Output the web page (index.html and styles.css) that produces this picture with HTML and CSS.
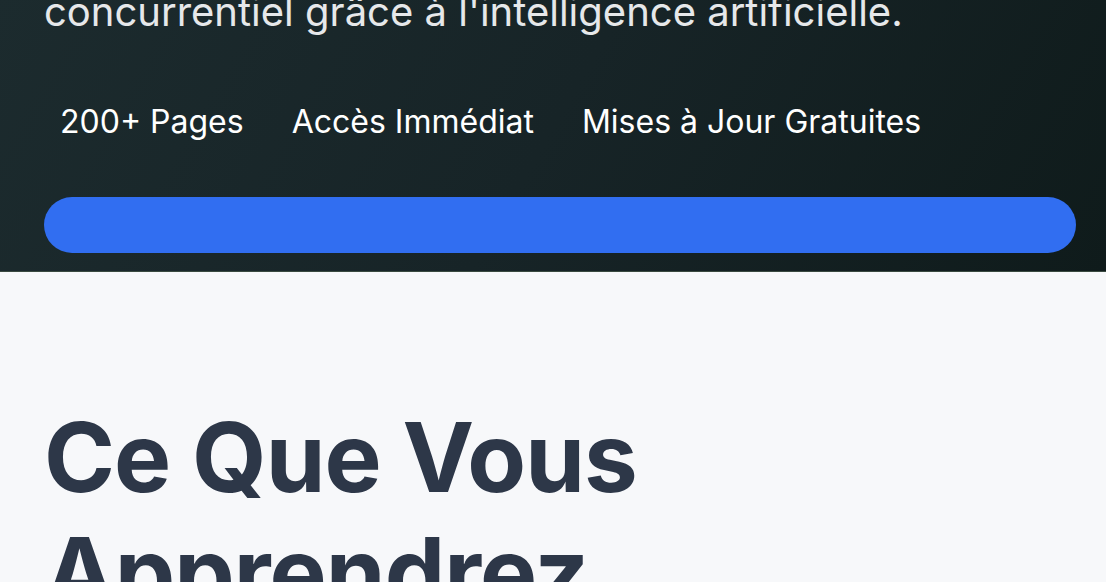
FILE: index.html
```html
<!DOCTYPE html>
<html lang="fr">
<head>
<meta charset="utf-8">
<title>Guide</title>
<link rel="stylesheet" href="styles.css">
</head>
<body>
<header class="hero">
  <p class="hero-lead">concurrentiel grâce à l'intelligence artificielle.</p>
  <ul class="features">
    <li class="feature">200+ Pages</li>
    <li class="feature">Accès Immédiat</li>
    <li class="feature">Mises à Jour Gratuites</li>
  </ul>
  <button class="cta" type="button" aria-label="Commencer"></button>
</header>
<section class="learn">
  <h2 class="learn-title">Ce Que Vous Apprendrez</h2>
</section>
</body>
</html>
```
FILE: styles.css
```css
* { box-sizing: border-box; }
html, body { margin: 0; padding: 0; }
body {
  font-family: Inter, "Noto Sans", sans-serif;
  background: #f7f8fa;
  overflow: hidden;
}
.hero {
  background: linear-gradient(120deg, #1c2b2e 0%, #172427 50%, #0f1b1b 100%);
  padding: 0 30px 18px 44px;
  border-bottom: 1px solid #3a4a40;
}
.hero-lead {
  margin: -18px 0 0;
  font-size: 40px;
  line-height: 60px;
  color: #e6e8ea;
}
.features {
  list-style: none;
  margin: 56px 0 0;
  padding: 0;
  display: flex;
  gap: 16px;
}
.feature {
  padding: 0 16px;
  font-size: 32px;
  line-height: 48px;
  color: #ffffff;
}
.cta {
  display: block;
  width: 100%;
  height: 56px;
  margin-top: 51px;
  border: 0;
  border-radius: 999px;
  background: #316ef1;
}
.learn {
  padding: 128px 44px 0 44px;
}
.learn-title {
  margin: 0;
  max-width: 660px;
  font-size: 96px;
  line-height: 1.2;
  font-weight: 700;
  letter-spacing: -0.01em;
  color: #2d3748;
}
```
